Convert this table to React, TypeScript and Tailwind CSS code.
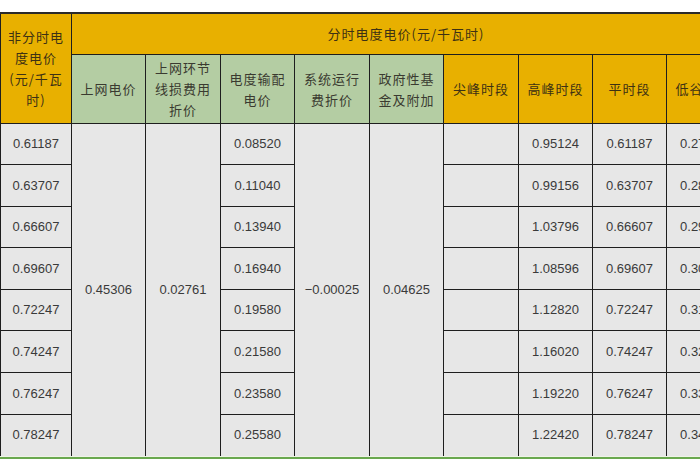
import React from "react";

const base = ["0.61187", "0.63707", "0.66607", "0.69607", "0.72247", "0.74247", "0.76247", "0.78247"];
const tdp = ["0.08520", "0.11040", "0.13940", "0.16940", "0.19580", "0.21580", "0.23580", "0.25580"];
const peak = ["0.95124", "0.99156", "1.03796", "1.08596", "1.12820", "1.16020", "1.19220", "1.22420"];
const valley = ["0.27250", "0.28258", "0.29418", "0.30618", "0.31674", "0.32474", "0.33274", "0.34074"];

const cjk = "font-['Noto_Sans_CJK_SC','Noto_Sans',sans-serif]";
const num = "font-['Liberation_Sans',Arial,sans-serif] text-[13px] text-[#3a3a3a]";
const bd = "border border-[#1e1e1e]";

export default function App() {
  return (
    <div className="w-[700px] h-[470px] overflow-hidden bg-white pt-[12px]">
      <table className="w-[740px] table-fixed border-collapse border-t-2 border-t-[#2a2a2a]">
        <colgroup>
          <col className="w-[71px]" />
          <col className="w-[74px]" />
          <col className="w-[75px]" />
          <col className="w-[74px]" />
          <col className="w-[75px]" />
          <col className="w-[74px]" />
          <col className="w-[75px]" />
          <col className="w-[74px]" />
          <col className="w-[74px]" />
          <col className="w-[74px]" />
        </colgroup>
        <thead>
          <tr className="h-[41px]">
            <th
              rowSpan={2}
              className={`${bd} bg-[#e8b000] ${cjk} text-[13px] leading-[21px] font-normal text-[#3d3114] tracking-[1px] px-[4px] align-middle`}
            >
              非分时电度电价(元/千瓦时)
            </th>
            <th
              colSpan={9}
              className={`${bd} bg-[#e8b000] ${cjk} text-[13px] font-normal text-[#3d3114] tracking-[1px] align-middle`}
            >
              分时电度电价(元/千瓦时)
            </th>
          </tr>
          <tr className="h-[69px]">
            {["上网电价", "上网环节线损费用折价", "电度输配电价", "系统运行费折价", "政府性基金及附加"].map((t) => (
              <th
                key={t}
                className={`${bd} bg-[#b4cda3] ${cjk} text-[13px] leading-[21px] font-normal text-[#3a3a30] tracking-[1px] px-[7px] align-middle`}
              >
                {t}
              </th>
            ))}
            {["尖峰时段", "高峰时段", "平时段", "低谷时段"].map((t) => (
              <th
                key={t}
                className={`${bd} bg-[#e8b000] ${cjk} text-[13px] leading-[21px] font-normal text-[#3d3114] tracking-[1px] px-[7px] align-middle whitespace-nowrap text-left`}
              >
                <div className="text-center">{t}</div>
              </th>
            ))}
          </tr>
        </thead>
        <tbody>
          {base.map((b, i) => (
            <tr key={i} className="h-[41.6px]">
              <td className={`${bd} ${i === 7 ? "border-b-0" : ""} bg-[#e7e7e7] ${num} text-center`}>{b}</td>
              {i === 0 && (
                <>
                  <td rowSpan={8} className={`${bd} border-b-0 bg-[#e7e7e7] ${num} text-center`}>0.45306</td>
                  <td rowSpan={8} className={`${bd} border-b-0 bg-[#e7e7e7] ${num} text-center`}>0.02761</td>
                </>
              )}
              <td className={`${bd} ${i === 7 ? "border-b-0" : ""} bg-[#e7e7e7] ${num} text-center`}>{tdp[i]}</td>
              {i === 0 && (
                <>
                  <td rowSpan={8} className={`${bd} border-b-0 bg-[#e7e7e7] ${num} text-center`}>−0.00025</td>
                  <td rowSpan={8} className={`${bd} border-b-0 bg-[#e7e7e7] ${num} text-center`}>0.04625</td>
                </>
              )}
              <td className={`${bd} ${i === 7 ? "border-b-0" : ""} bg-[#e7e7e7]`}></td>
              <td className={`${bd} ${i === 7 ? "border-b-0" : ""} bg-[#e7e7e7] ${num} text-center`}>{peak[i]}</td>
              <td className={`${bd} ${i === 7 ? "border-b-0" : ""} bg-[#e7e7e7] ${num} text-center`}>{b}</td>
              <td className={`${bd} ${i === 7 ? "border-b-0" : ""} bg-[#e7e7e7] ${num} text-center`}>{valley[i]}</td>
            </tr>
          ))}
        </tbody>
      </table>
      <div className="h-[1px] bg-[#eef3e6]"></div>
      <div className="h-[2px] bg-[#6aa84f]"></div>
    </div>
  );
}
